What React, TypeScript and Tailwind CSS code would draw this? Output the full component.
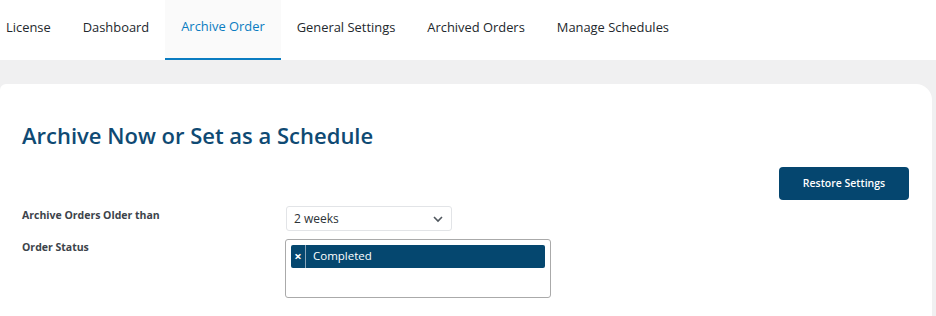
import React from "react";

const tabs = ["License", "Dashboard", "Archive Order", "General Settings", "Archived Orders", "Manage Schedules"];

export default function App() {
  return (
    <div className="w-[936px] h-[316px] overflow-hidden bg-[#f0f0f1]" style={{ fontFamily: '"Open Sans", "Noto Sans", sans-serif' }}>
      <nav className="flex h-[60px] bg-white pl-[6px]">
        {tabs.map((t, i) => {
          const active = t === "Archive Order";
          return (
            <div
              key={t}
              className={
                "flex items-center h-full text-[12.9px] font-medium " +
                (active
                  ? "bg-[#fafafa] border-b-2 border-[#0a7cc1] text-[#0a7cc1] px-[16px] pb-[4px]"
                  : "text-[#23282d] pb-[4px] " + (i === 0 ? "pr-[16px]" : "px-[16px]"))
              }
            >
              {t}
            </div>
          );
        })}
      </nav>
      <div className="mt-[24px] mr-[4px] h-[300px] bg-white rounded-tl-[6px] rounded-tr-[16px] pl-[22px] pr-[23px]">
        <h1 className="pt-[34px] text-[22px] leading-[34px] font-semibold text-[#0f4a73]">Archive Now or Set as a Schedule</h1>
        <div className="flex justify-end mt-[15px]">
          <button className="w-[130px] h-[33px] rounded-[4px] bg-[#05466f] text-white text-[10.5px] font-semibold">Restore Settings</button>
        </div>
        <div className="flex mt-[6px]">
          <div className="w-[264px] pt-[2px] text-[10.5px] font-bold text-[#3c434a]">Archive Orders Older than</div>
          <div className="w-[166px] h-[25px] border border-[#e2e4e7] rounded-[3px] flex items-center justify-between pl-[7px] pr-[7px] text-[12px] text-[#2c3338]">
            <span>2 weeks</span>
            <svg width="12" height="12" viewBox="0 0 12 12" fill="none">
              <path d="M2 4 L6 8 L10 4" stroke="#50575e" strokeWidth="1.6" />
            </svg>
          </div>
        </div>
        <div className="flex mt-[8px]">
          <div className="w-[263px] pt-[1px] text-[10.5px] font-bold text-[#3c434a]">Order Status</div>
          <div className="w-[266px] h-[59px] border border-[#aaaaaa] rounded-[3px] p-[5px]">
            <div className="flex h-[23px] bg-[#05476f] rounded-[2px] text-white text-[11.5px]">
              <span className="w-[15px] flex items-center justify-center border-r border-[#8aa6bb] font-bold text-[13px] leading-none">×</span>
              <span className="flex items-center pl-[7px] pb-[1px]">Completed</span>
            </div>
          </div>
        </div>
      </div>
    </div>
  );
}
